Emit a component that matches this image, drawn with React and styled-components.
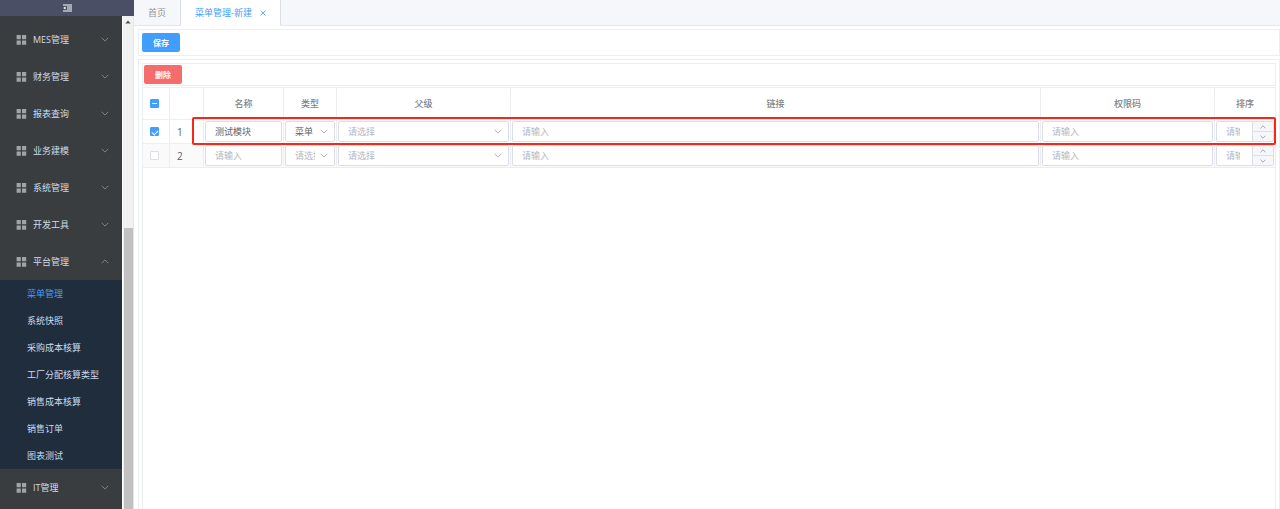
import React, { useEffect, useRef, useState } from "react";
import styled, { createGlobalStyle } from "styled-components";

const GlobalStyle = createGlobalStyle`
  * {
    box-sizing: border-box;
  }
  body {
    margin: 0;
    background: #fff;
    overflow: hidden;
  }
  body, button, input, select {
    font-family: "Open Sans", "Noto Sans CJK SC", sans-serif;
    font-size: 9px;
  }
  button {
    border: 0;
    padding: 0;
    background: none;
    cursor: pointer;
  }
  ul {
    margin: 0;
    padding: 0;
    list-style: none;
  }
`;

const Layout = styled.div`
  display: flex;
  height: 100vh;
`;

const Sidebar = styled.aside`
  display: flex;
  flex-direction: column;
  flex: 0 0 134px;
  overflow: hidden;
`;

const CollapseButton = styled.button`
  display: flex;
  align-items: center;
  justify-content: center;
  flex: 0 0 16px;
  background: #4a4f66;
`;

const SidebarBody = styled.div`
  display: flex;
  flex: 1;
  min-height: 0;
`;

const Menu = styled.nav`
  flex: 1;
  padding-top: 5px;
  background: #393d3f;
  overflow: hidden;
`;

const MenuTitle = styled.button`
  display: flex;
  align-items: center;
  gap: 6px;
  width: 100%;
  height: 37px;
  padding: 0 13px 0 16px;
  color: #ccdcea;
  text-align: left;

  span {
    flex: 1;
  }
`;

const SubMenu = styled.ul`
  background: #202d3d;
`;

const SubLink = styled.a`
  display: block;
  padding-left: 27px;
  line-height: 27px;
  color: ${({ $active }) => ($active ? "#409eff" : "#ccdcea")};
  text-decoration: none;
`;

const Scrollbar = styled.div`
  display: flex;
  flex-direction: column;
  align-items: center;
  justify-content: space-between;
  flex: 0 0 12px;
  padding-top: 4px;
  border-left: 1px solid #fff;
  border-right: 1px solid #e6e6e6;
  background: #f1f1f1;
`;

const ScrollThumb = styled.div`
  width: 9px;
  height: calc(57% + 2px);
  background: #c1c1c1;
`;

const Main = styled.main`
  display: flex;
  flex-direction: column;
  flex: 1;
  min-width: 0;
`;

const Tabs = styled.div`
  display: flex;
  flex: 0 0 26px;
  height: 26px;
  border-bottom: 1px solid #e4e7ed;
  background: #f5f7fa;
`;

const Tab = styled.div`
  display: flex;
  align-items: center;
  gap: 8px;
  height: 26px;
  margin-bottom: -1px;
  padding: 0 14px;
  border-right: 1px solid #dcdfe6;
  border-bottom: 1px solid ${({ $active }) => ($active ? "#fff" : "#e4e7ed")};
  background: ${({ $active }) => ($active ? "#fff" : "transparent")};

  button {
    display: flex;
    color: ${({ $active }) => ($active ? "#409eff" : "#909399")};
  }
`;

const Content = styled.div`
  display: flex;
  flex-direction: column;
  gap: 3px;
  flex: 1;
  min-height: 0;
  padding: 3px 0 0 4px;
`;

const Toolbar = styled.div`
  padding: 3px;
  border: 1px solid #ebeef5;
`;

const Panel = styled.section`
  display: flex;
  flex-direction: column;
  gap: 1px;
  flex: 1;
  padding: 3px 3px 0;
  border: 1px solid #ebeef5;
  border-bottom: 0;
`;

const TableToolbar = styled(Toolbar)`
  padding: 1px;
`;

const ActionButton = styled.button`
  display: block;
  height: 19px;
  padding: 0 11px;
  border-radius: 2px;
  background: ${({ $danger }) => ($danger ? "#f56c6c" : "#409eff")};
  color: #fff;
  font-size: 8px;
  font-weight: 700;
`;

const TableWrap = styled.div`
  flex: 1;
  border-top: 1px solid #ebeef5;
  border-left: 1px solid #ebeef5;
  border-right: 1px solid #ebeef5;
`;

const Table = styled.table`
  width: 100%;
  table-layout: fixed;
  border-spacing: 0;
  color: #606266;
`;

const HeadCell = styled.th`
  width: ${({ $width }) => $width || "auto"};
  height: 32px;
  padding: 0;
  border-right: 1px solid #ebeef5;
  border-bottom: 1px solid #ebeef5;
  color: #808389;
  font-size: 9px;
  font-weight: 500;

  &:first-child {
    padding-right: 3px;
  }
  &:last-child {
    border-right: 0;
  }
`;

const Cell = styled.td`
  height: 24px;
  padding: 1px;
  border-right: 1px solid #ebeef5;
  border-bottom: 1px solid #ebeef5;

  &:last-child {
    border-right: 0;
  }
`;

const Row = styled.tr`
  position: relative;
  background: ${({ $striped }) => ($striped ? "#fafafa" : "#fff")};

  ${Cell}:last-child::after {
    content: "";
    display: ${({ $marked }) => ($marked ? "block" : "none")};
    position: absolute;
    z-index: 1;
    top: -3px;
    right: -1px;
    bottom: -1px;
    left: 49px;
    border: 2px solid #f9261a;
    border-radius: 2px;
    pointer-events: none;
  }
`;

const CheckCell = styled(Cell)`
  padding: 1px 3px 1px 0;
`;

const IndexCell = styled(Cell)`
  padding-left: 7px;
  font-size: 10px;
`;

const Checkbox = styled.input`
  appearance: none;
  display: grid;
  place-items: center;
  width: 9px;
  height: 9px;
  margin: 0 auto;
  border: 1px solid #dcdfe6;
  border-radius: 1px;
  background: #fff;

  &:checked, &:indeterminate {
    border-color: #409eff;
    background: #409eff;
  }
  &:checked::after {
    content: "";
    width: 3px;
    height: 5px;
    border: solid #fff;
    border-width: 0 1px 1px 0;
    transform: rotate(45deg);
  }
  &:indeterminate::after {
    content: "";
    width: 5px;
    height: 1px;
    background: #fff;
  }
`;

const TextInput = styled.input`
  display: block;
  width: 100%;
  height: 21px;
  padding: 0 9px;
  border: 1px solid #dcdfe6;
  border-radius: 2px;
  background: #fff;
  color: #606266;
  outline: none;

  &::placeholder {
    color: #b4b8c0;
  }
  &:focus {
    border-color: #409eff;
  }
`;

const SelectBox = styled.div`
  display: grid;
  align-items: center;

  select, svg {
    grid-area: 1 / 1;
  }
  svg {
    justify-self: end;
    margin-right: 7px;
    pointer-events: none;
  }
`;

const Select = styled.select`
  appearance: none;
  width: 100%;
  height: 21px;
  padding: 0 19px 0 9px;
  border: 1px solid #dcdfe6;
  border-radius: 2px;
  background: #fff;
  color: ${({ $empty }) => ($empty ? "#b4b8c0" : "#606266")};
  text-overflow: clip;
  outline: none;
`;

const NumberBox = styled.div`
  display: flex;
  height: 21px;
  border: 1px solid #dcdfe6;
  border-radius: 2px;
  background: #fff;
  overflow: hidden;
`;

const NumberInput = styled(TextInput)`
  flex: 1;
  min-width: 0;
  height: 19px;
  padding-right: 12px;
  border: 0;
`;

const Steps = styled.div`
  display: flex;
  flex-direction: column;
  flex: 0 0 21px;
  border-left: 1px solid #dcdfe6;
  background: #f5f7fa;

  button {
    display: flex;
    align-items: center;
    justify-content: center;
    flex: 1;
  }
  button + button {
    border-top: 1px solid #dcdfe6;
  }
`;

const Chevron = ({ up, width = 8, color = "#a8abb2" }) => (
  <svg width={width} height={width / 2 + 1} viewBox="0 0 8 5" fill="none" stroke={color} aria-hidden="true">
    <path d={up ? "M.7 4.2 4 .9l3.3 3.3" : "M.7.8 4 4.1 7.3.8"} strokeWidth="0.9" />
  </svg>
);

const GridIcon = () => (
  <svg width="11" height="10" viewBox="0 0 11 10" fill="#a0a4a8" aria-hidden="true">
    <path d="M.6 0h4.2v4.3H.6zM6 0h4.2v4.3H6zM.6 5.4h4.2v4.3H.6zM6 5.4h4.2v4.3H6z" />
  </svg>
);

const FoldIcon = () => (
  <svg width="9" height="8" viewBox="0 0 9 8" fill="#fff" aria-hidden="true">
    <path d="M0 .5h9v1H0zM4 2.5h5v1H4zM4 4.5h5v1H4zM0 6.5h9v1H0zM.2 4l2.4-1.6v3.2z" />
  </svg>
);

const subItems = ["菜单管理", "系统快照", "采购成本核算", "工厂分配核算类型", "销售成本核算", "销售订单", "图表测试"];

const menu = [
  { title: "MES管理" },
  { title: "财务管理" },
  { title: "报表查询" },
  { title: "业务建模" },
  { title: "系统管理" },
  { title: "开发工具" },
  { title: "平台管理", children: subItems },
  { title: "IT管理" },
];

const columns = [
  { title: "名称", width: "80px" },
  { title: "类型", width: "53px" },
  { title: "父级", width: "174px" },
  { title: "链接" },
  { title: "权限码", width: "174px" },
  { title: "排序", width: "60px" },
];

const SideMenu = () => {
  const [open, setOpen] = useState("平台管理");
  return (
    <Menu>
      {menu.map(({ title, children }) => (
        <div key={title}>
          <MenuTitle aria-expanded={open === title} onClick={() => setOpen(open === title ? "" : title)}>
            <GridIcon />
            <span>{title}</span>
            <Chevron up={open === title} color="#878b8f" />
          </MenuTitle>
          {children && open === title && (
            <SubMenu>
              {children.map((item, i) => (
                <li key={item}>
                  <SubLink href="#" $active={i === 0}>{item}</SubLink>
                </li>
              ))}
            </SubMenu>
          )}
        </div>
      ))}
    </Menu>
  );
};

const SelectField = ({ label, options = [], initial = "" }) => {
  const [value, setValue] = useState(initial);
  return (
    <SelectBox>
      <Select aria-label={label} $empty={!value} value={value} onChange={(e) => setValue(e.target.value)}>
        <option value="">请选择</option>
        {options.map((option) => (
          <option key={option}>{option}</option>
        ))}
      </Select>
      <Chevron />
    </SelectBox>
  );
};

const NumberField = ({ label }) => {
  const [value, setValue] = useState("");
  return (
    <NumberBox>
      <NumberInput
        aria-label={label}
        inputMode="numeric"
        placeholder="请输入"
        value={value}
        onChange={(e) => setValue(e.target.value)}
      />
      <Steps>
        <button aria-label="增加" onClick={() => setValue(Number(value) + 1)}><Chevron up width={6} color="#808389" /></button>
        <button aria-label="减少" onClick={() => setValue(Number(value) - 1)}><Chevron width={6} color="#808389" /></button>
      </Steps>
    </NumberBox>
  );
};

const MenuTable = () => {
  const [checked, setChecked] = useState([true, false]);
  const allRef = useRef(null);
  const all = checked.every(Boolean);

  useEffect(() => {
    allRef.current.indeterminate = !all && checked.some(Boolean);
  }, [checked, all]);

  return (
    <Table>
      <thead>
        <tr>
          <HeadCell $width="27px">
            <Checkbox
              ref={allRef}
              type="checkbox"
              aria-label="全选"
              checked={all}
              onChange={() => setChecked(checked.map(() => !all))}
            />
          </HeadCell>
          <HeadCell $width="34px" />
          {columns.map(({ title, width }) => (
            <HeadCell key={title} $width={width}>{title}</HeadCell>
          ))}
        </tr>
      </thead>
      <tbody>
        {checked.map((isChecked, i) => (
          <Row key={i} $striped={i % 2 === 1} $marked={i === 0}>
            <CheckCell>
              <Checkbox
                type="checkbox"
                aria-label={`选择 ${i + 1}`}
                checked={isChecked}
                onChange={() => setChecked(checked.map((c, n) => (n === i ? !c : c)))}
              />
            </CheckCell>
            <IndexCell>{i + 1}</IndexCell>
            <Cell><TextInput aria-label="名称" placeholder="请输入" defaultValue={i === 0 ? "测试模块" : ""} /></Cell>
            <Cell><SelectField label="类型" options={["菜单"]} initial={i === 0 ? "菜单" : ""} /></Cell>
            <Cell><SelectField label="父级" /></Cell>
            <Cell><TextInput aria-label="链接" placeholder="请输入" /></Cell>
            <Cell><TextInput aria-label="权限码" placeholder="请输入" /></Cell>
            <Cell><NumberField label="排序" /></Cell>
          </Row>
        ))}
      </tbody>
    </Table>
  );
};

const App = () => (
  <Layout>
    <GlobalStyle />
    <Sidebar>
      <CollapseButton aria-label="收起菜单"><FoldIcon /></CollapseButton>
      <SidebarBody>
        <SideMenu />
        <Scrollbar>
          <svg width="6" height="4" viewBox="0 0 6 4" fill="#505050" aria-hidden="true">
            <path d="M3 .5 5.6 3.5H.4z" />
          </svg>
          <ScrollThumb />
        </Scrollbar>
      </SidebarBody>
    </Sidebar>
    <Main>
      <Tabs>
        <Tab><button>首页</button></Tab>
        <Tab $active>
          <button>菜单管理-新建</button>
          <button aria-label="关闭">
            <svg width="6" height="6" viewBox="0 0 6 6" stroke="currentColor" strokeWidth="0.8" aria-hidden="true">
              <path d="M.5.5l5 5M5.5.5l-5 5" />
            </svg>
          </button>
        </Tab>
      </Tabs>
      <Content>
        <Toolbar><ActionButton>保存</ActionButton></Toolbar>
        <Panel>
          <TableToolbar><ActionButton $danger>删除</ActionButton></TableToolbar>
          <TableWrap><MenuTable /></TableWrap>
        </Panel>
      </Content>
    </Main>
  </Layout>
);

export default App;
